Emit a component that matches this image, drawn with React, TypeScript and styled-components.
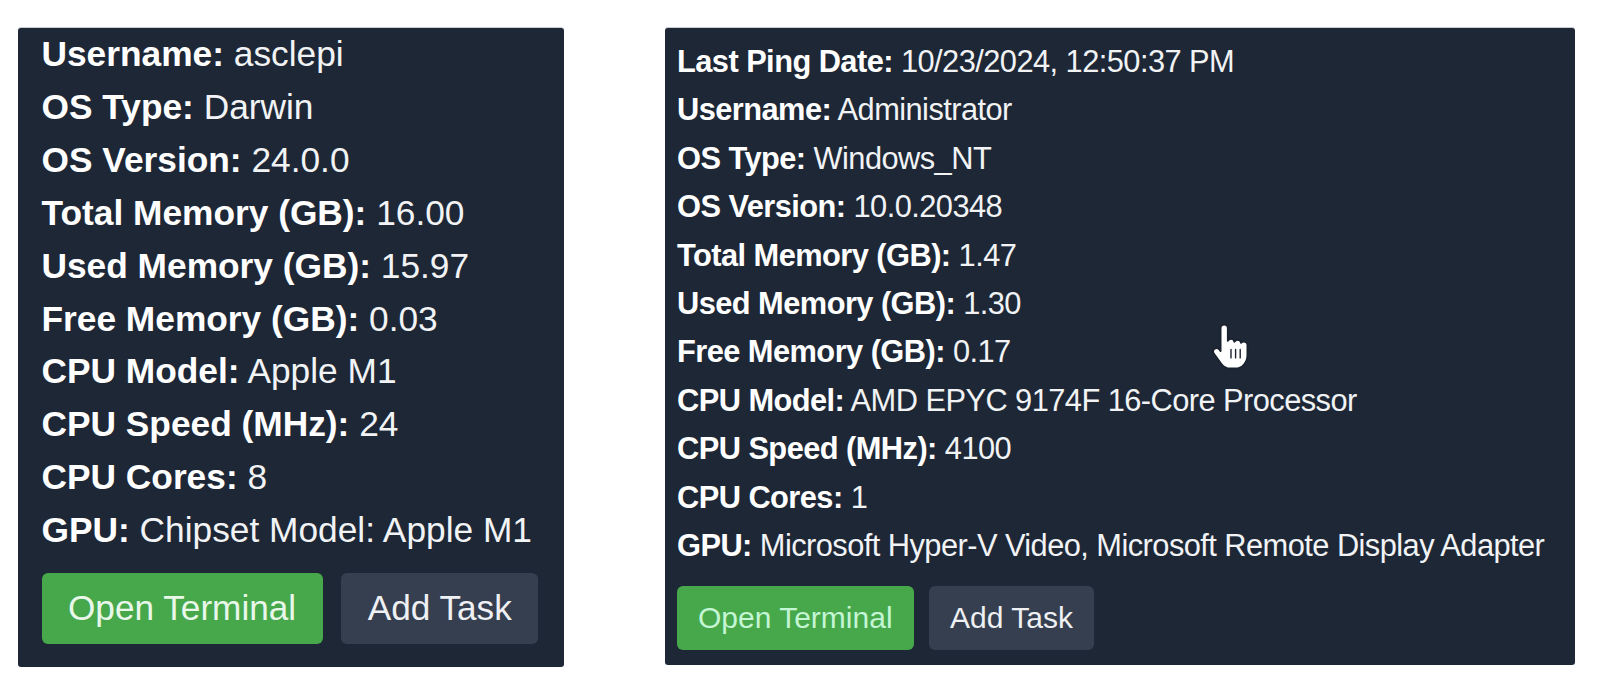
import React from 'react';
import styled, { createGlobalStyle } from 'styled-components';

/*
 * Types
*/
type Size = 'large' | 'small';
type Field = { label: string; value: string };

type AgentCardProps = {
    fields: Field[];
    size: Size;
    showCursor?: boolean;
};

/*
 * Styling
*/
const GlobalStyle = createGlobalStyle`
    html, body {
        margin: 0;
        padding: 0;
        background: #ffffff;
        overflow: hidden;
    }
    body {
        font-family: "Liberation Sans", Arial, sans-serif;
    }
`;

const Page = styled.div`
    display: flex;
    align-items: flex-start;
    gap: 101px;
    padding: 28px 0 0 18px;
`;

const Card = styled.div<{ $size: Size }>`
    position: relative;
    flex: none;
    box-sizing: border-box;
    background: #1e2736;
    border-radius: 3px;
    color: #f1f3f5;
    width: ${p => (p.$size === 'large' ? '546px' : '910px')};
    height: ${p => (p.$size === 'large' ? '639px' : '637px')};
    padding: ${p => (p.$size === 'large' ? '0 20px 0 23.5px' : '10px 20px 0 12px')};
    box-shadow: 0 -1px 0 #c9ccd1;
`;

const Row = styled.div<{ $size: Size }>`
    white-space: nowrap;
    font-size: ${p => (p.$size === 'large' ? '35.3px' : '30.8px')};
    line-height: ${p => (p.$size === 'large' ? '52.9px' : '48.4px')};
    letter-spacing: ${p => (p.$size === 'large' ? '0' : '-0.55px')};
`;

const Label = styled.strong`
    font-weight: 700;
    color: #ffffff;
`;

const Actions = styled.div<{ $size: Size }>`
    display: flex;
    gap: ${p => (p.$size === 'large' ? '18.5px' : '15.5px')};
    margin-top: 15.5px;
`;

const Button = styled.button<{ $variant: 'green' | 'gray'; $size: Size }>`
    border: none;
    cursor: pointer;
    font-family: "Liberation Sans", Arial, sans-serif;
    border-radius: 6px;
    font-size: ${p => (p.$size === 'large' ? '35.2px' : '30px')};
    height: ${p => (p.$size === 'large' ? '71.5px' : '64.5px')};
    padding: ${p => (p.$size === 'large' ? '0 26.5px' : '0 21px')};
    background: ${p => (p.$variant === 'green' ? '#46a84a' : '#353f4f')};
    color: ${p =>
        p.$variant === 'green'
            ? p.$size === 'large' ? '#e9f7ea' : '#c4f5d4'
            : '#eef0f3'};
`;

const Cursor = styled.svg`
    position: absolute;
    left: 546px;
    top: 294px;
    width: 38px;
    height: 49px;
`;

/*
 * Data
*/
const macFields: Field[] = [
    { label: 'Username:', value: 'asclepi' },
    { label: 'OS Type:', value: 'Darwin' },
    { label: 'OS Version:', value: '24.0.0' },
    { label: 'Total Memory (GB):', value: '16.00' },
    { label: 'Used Memory (GB):', value: '15.97' },
    { label: 'Free Memory (GB):', value: '0.03' },
    { label: 'CPU Model:', value: 'Apple M1' },
    { label: 'CPU Speed (MHz):', value: '24' },
    { label: 'CPU Cores:', value: '8' },
    { label: 'GPU:', value: 'Chipset Model: Apple M1' },
];

const winFields: Field[] = [
    { label: 'Last Ping Date:', value: '10/23/2024, 12:50:37 PM' },
    { label: 'Username:', value: 'Administrator' },
    { label: 'OS Type:', value: 'Windows_NT' },
    { label: 'OS Version:', value: '10.0.20348' },
    { label: 'Total Memory (GB):', value: '1.47' },
    { label: 'Used Memory (GB):', value: '1.30' },
    { label: 'Free Memory (GB):', value: '0.17' },
    { label: 'CPU Model:', value: 'AMD EPYC 9174F 16-Core Processor' },
    { label: 'CPU Speed (MHz):', value: '4100' },
    { label: 'CPU Cores:', value: '1' },
    { label: 'GPU:', value: 'Microsoft Hyper-V Video, Microsoft Remote Display Adapter' },
];

/*
 * Components
*/
const HandCursor = () => (
    <Cursor viewBox="0 0 19 24">
        <path
            d="M6.6 1c1 0 1.8.8 1.8 1.8v6.4c.3-.6.9-1 1.6-1 .9 0 1.6.6 1.7 1.5.3-.6.9-1 1.6-1 .9 0 1.6.6 1.7 1.5.3-.4.8-.7 1.4-.7 1 0 1.8.8 1.8 1.8v4.9c0 3.7-2.6 6.8-6 6.8H9.7c-1.9 0-3.5-.9-4.6-2.4L1.4 15.5c-.6-.8-.4-1.9.4-2.4.8-.5 1.7-.4 2.3.3l.7.9V2.8c0-1 .8-1.8 1.8-1.8z"
            fill="#ffffff"
            stroke="#1a2230"
            strokeWidth="0.9"
            strokeLinejoin="round"
        />
        <path d="M10 13.5v4.2M12.3 13.5v4.2M14.6 13.5v4.2" stroke="#1a2230" strokeWidth="0.7" strokeLinecap="round" />
    </Cursor>
);

const AgentCard: React.FC<AgentCardProps> = ({ fields, size, showCursor }) => (
    <Card $size={size}>
        {fields.map(f => (
            <Row key={f.label} $size={size}>
                <Label>{f.label}</Label> {f.value}
            </Row>
        ))}
        <Actions $size={size}>
            <Button $variant="green" $size={size}>Open Terminal</Button>
            <Button $variant="gray" $size={size}>Add Task</Button>
        </Actions>
        {showCursor && <HandCursor />}
    </Card>
);

const App: React.FC = () => (
    <>
        <GlobalStyle />
        <Page>
            <AgentCard fields={macFields} size="large" />
            <AgentCard fields={winFields} size="small" showCursor />
        </Page>
    </>
);

export default App;
